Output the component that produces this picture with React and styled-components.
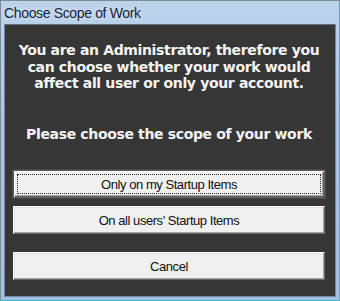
import styled, { createGlobalStyle } from 'styled-components';

const GlobalStyle = createGlobalStyle`
  html, body {
    margin: 0;
    padding: 0;
    background: #ffffff;
  }
  * {
    box-sizing: border-box;
  }
`;

const Window = styled.div`
  width: 340px;
  height: 301px;
  display: flex;
  flex-direction: column;
  border: 1px solid #7d8b99;
  border-right-color: #3fb5dc;
  border-bottom-color: #3fb5dc;
  background: linear-gradient(to bottom, #bcd3ec 0%, #a9c4e2 40%, #a4c0df 100%);
  padding: 0 3px 3px 3px;
`;

const TitleBar = styled.div`
  height: 23px;
  flex: none;
  display: flex;
  align-items: center;
  font-family: 'Liberation Sans', Arial, sans-serif;
  font-size: 14px;
  letter-spacing: -0.35px;
  color: #1b1e3a;
  text-shadow: 0 0 6px rgba(255, 255, 255, 0.7);
`;

const Content = styled.div`
  flex: 1;
  background: #363636;
  border: 1px solid #6d8aa8;
  border-top-color: #5c6f84;
  display: flex;
  flex-direction: column;
  align-items: center;
  padding: 17px 11px 0 9px;
`;

const Message = styled.p`
  margin: 0;
  text-align: center;
  font-family: 'DejaVu Sans', Verdana, sans-serif;
  font-weight: bold;
  font-size: 14px;
  line-height: 16.5px;
  color: #f4f4f4;
  letter-spacing: -0.35px;
  white-space: nowrap;
  margin-bottom: ${({ $gap }) => $gap || 0}px;
`;

const ButtonStack = styled.div`
  width: 312px;
  display: flex;
  flex-direction: column;
  margin-top: 28px;
`;

const Button = styled.button`
  height: 28px;
  width: 100%;
  margin-top: ${({ $gap }) => $gap || 0}px;
  padding: 0;
  background: #f0f0f0;
  border: 1px solid;
  border-color: ${({ $isDefault }) =>
    $isDefault ? '#5a5a5a' : '#ffffff #696969 #696969 #ffffff'};
  box-shadow: ${({ $isDefault }) =>
    $isDefault
      ? '0 0 0 1px #4b4b4b, inset 1px 1px 0 #ffffff, inset -1px -1px 0 #696969, inset -2px -2px 0 #a0a0a0'
      : 'inset -1px -1px 0 #a0a0a0, inset 1px 1px 0 #e3e3e3'};
  font-family: 'Liberation Sans', Arial, sans-serif;
  font-size: 13px;
  letter-spacing: -0.45px;
  color: #111111;
  position: relative;
`;

const FocusRing = styled.span`
  position: absolute;
  inset: 3px;
  border: 1px dotted #222222;
`;

export default function App() {
  return (
    <>
      <GlobalStyle />
      <Window>
        <TitleBar>Choose Scope of Work</TitleBar>
        <Content>
          <Message $gap={34}>
            You are an Administrator, therefore you
            <br />
            can choose whether your work would
            <br />
            affect all user or only your account.
          </Message>
          <Message>Please choose the scope of your work</Message>
          <ButtonStack>
            <Button $isDefault>
              <FocusRing />
              Only on my Startup Items
            </Button>
            <Button $gap={8}>On all users' Startup Items</Button>
            <Button $gap={18}>Cancel</Button>
          </ButtonStack>
        </Content>
      </Window>
    </>
  );
}
